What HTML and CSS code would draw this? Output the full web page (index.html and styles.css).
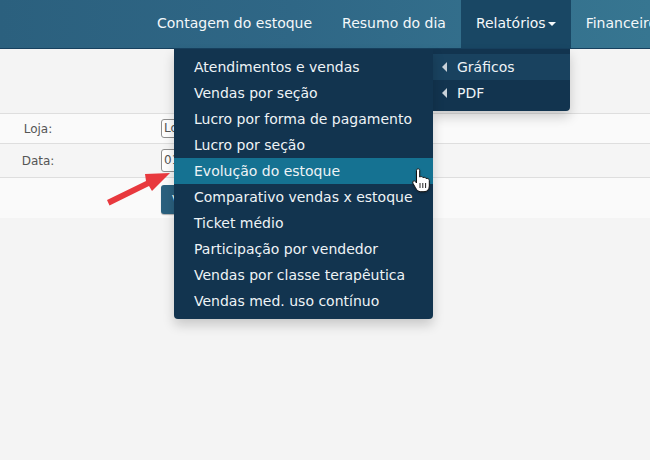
FILE: index.html
```html
<!DOCTYPE html>
<html lang="pt-BR">
<head>
<meta charset="utf-8">
<title>Relatórios</title>
<link rel="stylesheet" href="styles.css">
</head>
<body>
<header class="topbar">
  <nav class="nav">
    <a class="nav-item">Contagem do estoque</a>
    <a class="nav-item">Resumo do dia</a>
    <a class="nav-item nav-active">Relatórios<span class="caret"></span></a>
    <a class="nav-item">Financeiro</a>
  </nav>
</header>
<main class="page">
  <div class="spacer"></div>
  <div class="row row-loja"><label class="label">Loja:</label><span class="field">Loja</span></div>
  <div class="row row-data"><label class="label">Data:</label><span class="field">01/01/2020</span></div>
  <div class="row-btn"><button class="btn">Ver</button></div>
</main>
<ul class="menu">
  <li class="menu-item">Atendimentos e vendas</li>
  <li class="menu-item">Vendas por seção</li>
  <li class="menu-item">Lucro por forma de pagamento</li>
  <li class="menu-item">Lucro por seção</li>
  <li class="menu-item menu-hover">Evolução do estoque</li>
  <li class="menu-item">Comparativo vendas x estoque</li>
  <li class="menu-item">Ticket médio</li>
  <li class="menu-item">Participação por vendedor</li>
  <li class="menu-item">Vendas por classe terapêutica</li>
  <li class="menu-item">Vendas med. uso contínuo</li>
</ul>
<ul class="submenu">
  <li class="sub-item sub-active"><span class="tri"></span>Gráficos</li>
  <li class="sub-item"><span class="tri"></span>PDF</li>
</ul>
<svg class="arrow" width="75" height="45" viewBox="0 0 75 45"><path d="M7 35 L46 16 L45 9 L70 8 L52 26 L49 21 L9.500 40.500 Z" fill="#e8393e"/></svg>
<svg class="hand" width="19" height="25" viewBox="0 0 19 25"><path d="M4.500 2.400C4.500 .3 7.700 .3 7.700 2.400V9C9 8.300 10.500 8.500 11 9.600 12.200 9 13.700 9.300 14.100 10.500 15.500 10 17.300 10.800 17.300 12.500V18C17.300 21.500 15.300 23.700 12 23.700H8.800C6 23.700 4.800 22 3.500 19.800L.9 15.200C0 13.500 2.100 12 3.200 13.300L4.500 15Z" fill="#fff" stroke="#111" stroke-width="1"/><path d="M8 15V20M10.800 15V20M13.600 15V20" stroke="#222" stroke-width="1" fill="none"/></svg>
</body>
</html>
```
FILE: styles.css
```css
* { box-sizing: border-box; }
html, body { margin: 0; height: 100%; overflow: hidden; }
body { width: 650px; height: 460px; background: #f4f4f4; font-family: "DejaVu Sans", Verdana, sans-serif; font-size: 14px; color: #333; position: relative; }
.topbar { height: 49px; background: linear-gradient(90deg, #2b607e 0%, #2f6786 45%, #377691 100%); border-bottom: 1px solid #17415f; overflow: hidden; }
.nav { display: flex; width: 800px; padding-left: 142px; height: 48px; }
.nav-item { padding: 0 15px; line-height: 47px; color: #f4f8fa; white-space: nowrap; }
.nav-active { background: #194764; }
.caret { display: inline-block; margin-left: 2px; vertical-align: middle; width: 0; height: 0; border-left: 4px solid transparent; border-right: 4px solid transparent; border-top: 4px solid #f4f8fa; }
.spacer { height: 64px; }
.row { display: flex; align-items: center; border-top: 1px solid #dedede; background: #fafafa; color: #555; font-size: 12px; }
.row-loja { height: 30px; }
.row-data { height: 34px; background: #f5f5f5; }
.label { width: 76px; text-align: center; }
.field { margin-left: 85px; width: 60px; height: 19px; padding: 0 2px; border: 1px solid #8f8f8f; border-radius: 3px; background: #fff; line-height: 17px; overflow: hidden; white-space: nowrap; }
.row-data .field { height: 23px; line-height: 21px; }
.row-btn { height: 41px; padding: 7px 0 0 161px; border-top: 1px solid #dedede; background: #fafafa; }
.btn { width: 60px; height: 29px; padding: 0 0 0 11px; border: 0; border-radius: 3px; background: #2a607e; box-shadow: 0 1px 1px rgba(0, 0, 0, .3); color: #fff; font: 12px "DejaVu Sans", sans-serif; text-align: left; }
.menu, .submenu { position: absolute; top: 49px; margin: 0; padding: 5px 0; list-style: none; background: #12344f; box-shadow: 0 6px 12px rgba(0, 0, 0, .18); }
.menu { left: 174px; width: 259px; border-radius: 0 0 4px 4px; z-index: 2; }
.submenu { left: 433px; width: 137px; border-radius: 0 0 4px 0; z-index: 1; }
.menu-item, .sub-item { height: 26px; line-height: 26px; color: #eef3f6; white-space: nowrap; }
.menu-item { padding-left: 20px; }
.menu-hover { background: #157292; }
.sub-item { display: flex; align-items: center; padding-left: 9px; }
.sub-active { background: #19425f; }
.tri { width: 0; height: 0; margin-right: 10px; border-top: 5px solid transparent; border-bottom: 5px solid transparent; border-right: 5px solid #c9d2d9; }
.arrow { position: absolute; left: 100px; top: 165px; z-index: 3; }
.hand { position: absolute; left: 412px; top: 168px; z-index: 3; filter: drop-shadow(0 1px 1px rgba(0, 0, 0, .25)); }
```
